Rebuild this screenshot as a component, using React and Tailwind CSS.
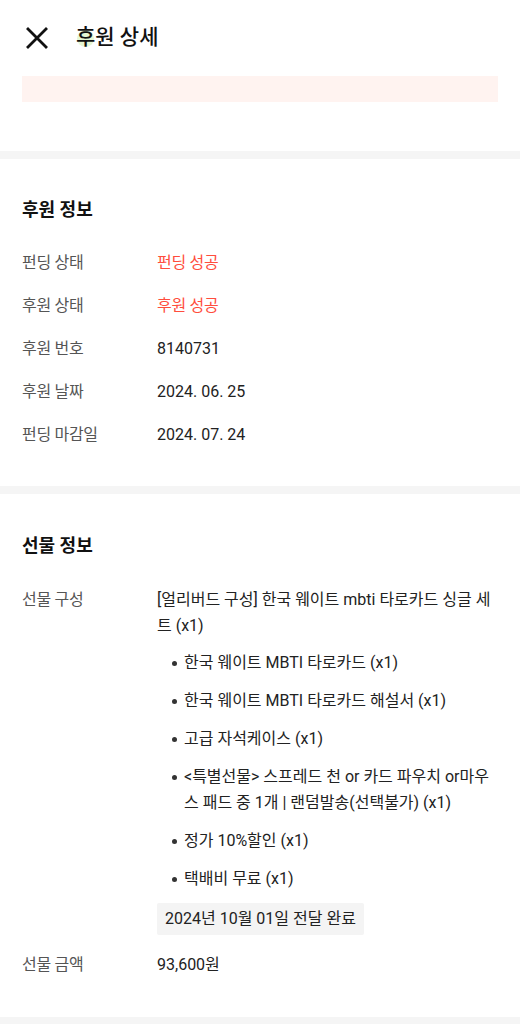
import { useState } from 'react'

const font = { fontFamily: 'Roboto, "Noto Sans CJK KR", sans-serif' }

function Row({ label, children, red }) {
    return (
        <div className="flex text-[16px] leading-[26px]">
            <div className="w-[135px] shrink-0 text-[#555] tracking-[-0.3px]">{label}</div>
            <div className={`flex-1 min-w-0 ${red ? 'text-[#ff4d3d] tracking-[-0.3px]' : 'text-[#222]'}`}>{children}</div>
        </div>
    )
}

function Bullet({ children }) {
    return (
        <li className="flex">
            <span className="w-[27px] shrink-0 flex justify-end pr-[7px] pt-[11px]">
                <span className="block w-[5px] h-[5px] rounded-full bg-[#333]" />
            </span>
            <span className="flex-1">{children}</span>
        </li>
    )
}

export default function App() {
    const [open] = useState(true)

    const items = [
        '한국 웨이트 MBTI 타로카드 (x1)',
        '한국 웨이트 MBTI 타로카드 해설서 (x1)',
        '고급 자석케이스 (x1)',
        '<특별선물> 스프레드 천 or 카드 파우치 or마우스 패드 중 1개 | 랜덤발송(선택불가) (x1)',
        '정가 10%할인 (x1)',
        '택배비 무료 (x1)',
    ]

    return (
        <div className="w-[520px] min-h-[1024px] bg-white" style={font}>
            {/* Header */}
            <div className="h-[76px] flex items-center px-[22px]">
                <button className="w-[32px] h-[32px] flex items-center justify-center -ml-[1px]">
                    <svg width="24" height="24" viewBox="0 0 24 24" fill="none" stroke="#111" strokeWidth="2.8" strokeLinecap="square">
                        <path d="M3 3L21 21M21 3L3 21" />
                    </svg>
                </button>
                <h1 className="ml-[23px] text-[21px] font-medium text-[#111] relative">
                    <span className="absolute left-[1px] top-[8px] w-[17px] h-[17px] rounded-full bg-[#e6f7d4]" />
                    <span className="relative">후원 상세</span>
                </h1>
            </div>

            <div className="px-[22px] pb-[49px]">
                <div className="h-[26px] bg-[#fff3f0]" />
            </div>

            <div className="h-[8px] bg-[#f5f5f5]" />

            {/* 후원 정보 */}
            <section className="px-[22px] pt-[39px] pb-[38px]">
                <h2 className="text-[18px] leading-[24px] font-bold text-[#111]">후원 정보</h2>
                <div className="mt-[28px] flex flex-col gap-[17px]">
                    <Row label="펀딩 상태" red>펀딩 성공</Row>
                    <Row label="후원 상태" red>후원 성공</Row>
                    <Row label="후원 번호">8140731</Row>
                    <Row label="후원 날짜">2024. 06. 25</Row>
                    <Row label="펀딩 마감일">2024. 07. 24</Row>
                </div>
            </section>

            <div className="h-[8px] bg-[#f5f5f5]" />

            {/* 선물 정보 */}
            <section className="px-[22px] pt-[40px] pb-[39px]">
                <h2 className="text-[18px] leading-[24px] font-bold text-[#111]">선물 정보</h2>
                <div className="mt-[29px] flex flex-col gap-[17px]">
                    <Row label="선물 구성">
                        <div>[얼리버드 구성] 한국 웨이트 mbti 타로카드 싱글 세트 (x1)</div>
                        {open && (
                            <ul className="mt-[11px] flex flex-col gap-[12px]">
                                {items.map((t) => (
                                    <Bullet key={t}>{t}</Bullet>
                                ))}
                            </ul>
                        )}
                        <div className="mt-[11px] inline-flex items-center h-[32px] px-[8px] bg-[#f4f4f4] rounded-[2px] text-[16px]">
                            2024년 10월 01일 전달 완료
                        </div>
                    </Row>
                    <Row label="선물 금액">93,600원</Row>
                </div>
            </section>

            <div className="h-[8px] bg-[#f5f5f5]" />
        </div>
    )
}
